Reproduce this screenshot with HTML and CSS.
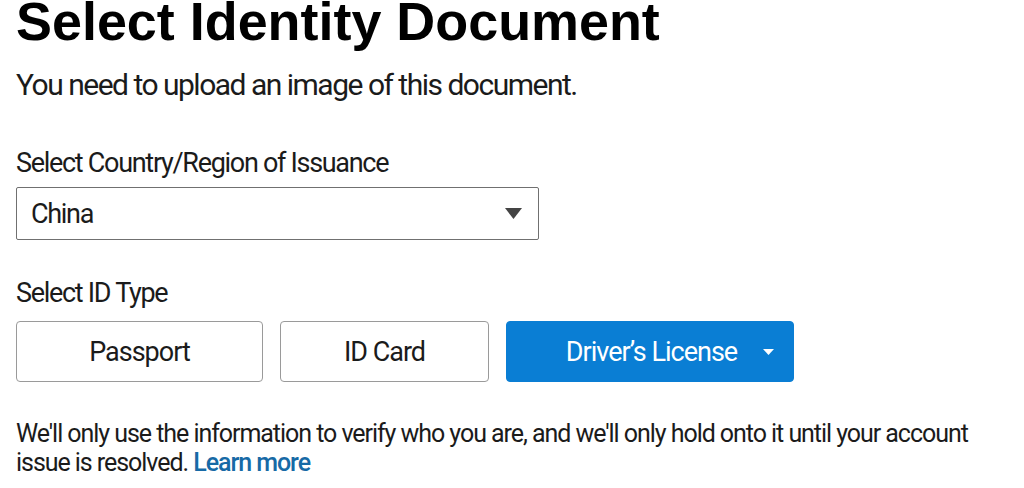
FILE: index.html
```html
<!DOCTYPE html>
<html>
<head>
<meta charset="utf-8">
<link rel="stylesheet" href="styles.css">
</head>
<body>
<main class="page">
  <h1 class="title">Select Identity Document</h1>
  <p class="subtitle">You need to upload an image of this document.</p>

  <section class="field">
    <label class="label">Select Country/Region of Issuance</label>
    <div class="select">
      <span class="select-value">China</span>
      <svg class="caret" width="17" height="11" viewBox="0 0 17 11"><path d="M0 0H17L8.5 11Z" fill="#444"/></svg>
    </div>
  </section>

  <section class="field types">
    <label class="label">Select ID Type</label>
    <div class="buttons">
      <button class="btn btn-passport">Passport</button>
      <button class="btn btn-id">ID Card</button>
      <button class="btn btn-primary">Driver’s License
        <svg class="btn-caret" width="11" height="6" viewBox="0 0 11 6"><path d="M0 0H11L5.5 6Z" fill="#fff"/></svg>
      </button>
    </div>
  </section>

  <p class="note">We'll only use the information to verify who you are, and we'll only hold onto it until your account issue is resolved. <a class="link" href="#">Learn more</a></p>
</main>
</body>
</html>
```

FILE: styles.css
```css
html, body {
  margin: 0;
  padding: 0;
  background: #fff;
}
body {
  font-family: Roboto, "Open Sans", sans-serif;
  color: #1b1b1b;
}
.page {
  padding: 0 16px;
}
.title {
  font-family: "Liberation Sans", Arial, sans-serif;
  font-weight: 700;
  font-size: 53.9px;
  line-height: 60px;
  margin: -9px 0 0;
  color: #000;
}
.subtitle {
  font-size: 30px;
  line-height: 40px;
  letter-spacing: -1.5px;
  margin: 14px 0 0;
}
.field {
  margin-top: 41px;
}
.label {
  display: block;
  font-size: 27px;
  line-height: 34px;
  letter-spacing: -1.3px;
}
.select {
  margin-top: 7px;
  width: 523px;
  height: 53px;
  border: 1px solid #707070;
  border-radius: 2px;
  display: flex;
  align-items: center;
  justify-content: space-between;
  padding: 0 16px 0 14px;
  box-sizing: border-box;
}
.select-value {
  font-size: 27px;
  letter-spacing: -1.3px;
}
.types {
  margin-top: 36px;
}
.buttons {
  display: flex;
  gap: 17px;
  margin-top: 11px;
}
.btn {
  font-family: inherit;
  font-size: 27px;
  letter-spacing: -1px;
  height: 61px;
  border: 1px solid #9a9a9a;
  border-radius: 4px;
  background: #fff;
  color: #1b1b1b;
  display: flex;
  align-items: center;
  justify-content: center;
  padding: 0;
  box-sizing: border-box;
}
.btn-passport { width: 247px; }
.btn-id { width: 209px; }
.btn-primary {
  width: 288px;
  background: #0a7ed4;
  border-color: #0a7ed4;
  color: #fff;
  gap: 26px;
  padding-left: 40px;
}
.note {
  margin: 37px 0 0;
  font-size: 25px;
  line-height: 29px;
  letter-spacing: -1.05px;
}
.link {
  color: #176aa6;
  font-weight: 500;
  text-decoration: none;
}
```
